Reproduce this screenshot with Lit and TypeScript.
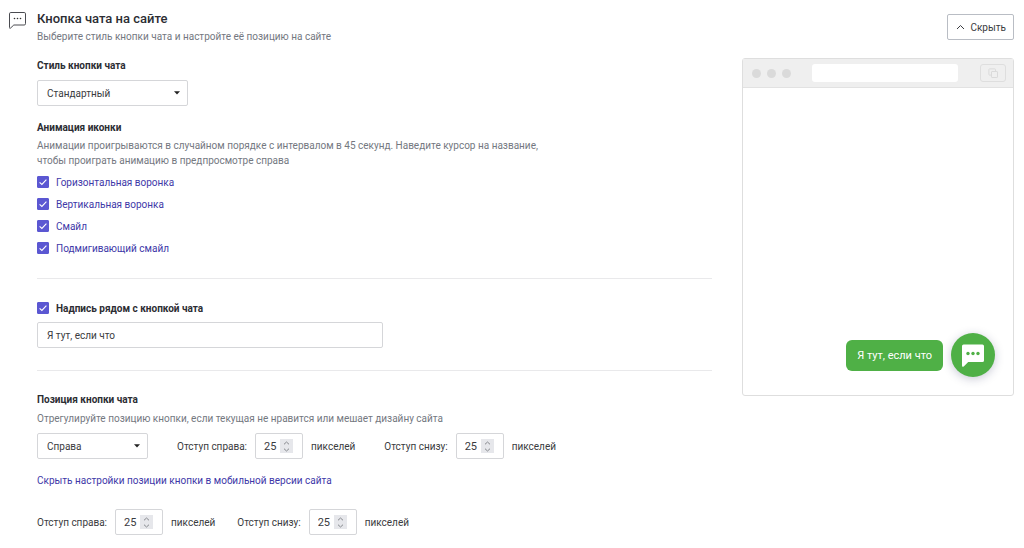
import { LitElement, html, css, svg } from "lit";
import { customElement, property, state } from "lit/decorators.js";

@customElement("pixel-field")
export class PixelField extends LitElement {
  @property() label = "";
  @property({ type: Number }) value = 25;

  static styles = css`
    :host {
      display: block;
    }
    .field {
      display: flex;
      align-items: center;
      gap: 8px;
      white-space: nowrap;
    }
    .box {
      box-sizing: border-box;
      display: flex;
      align-items: center;
      width: 48px;
      height: 26px;
      padding: 0 9px 0 8px;
      border: 1px solid #d5d6d9;
      border-radius: 2px;
      background: #fff;
    }
    .number {
      flex: 1;
      min-width: 0;
      width: 0;
      padding: 0;
      border: 0;
      outline: 0;
      background: none;
      color: inherit;
      font: inherit;
      font-size: 11px;
      appearance: textfield;
    }
    .number::-webkit-inner-spin-button {
      appearance: none;
      margin: 0;
    }
    .spinner {
      display: grid;
      width: 13px;
      height: 14px;
      background: #e6e7eb;
    }
    .step {
      display: grid;
      place-items: center;
      height: 7px;
      padding: 0;
      border: 0;
      background: none;
    }
    .arrow {
      display: block;
      fill: none;
      stroke: #85878c;
    }
  `;

  private step(delta: number) {
    this.value = Math.max(0, this.value + delta);
  }

  render() {
    return html`
      <div class="field">
        <label for="value">${this.label}</label>
        <div class="box">
          <input
            class="number"
            id="value"
            type="number"
            .value=${String(this.value)}
            @change=${(e: Event) => (this.value = Number((e.target as HTMLInputElement).value))}
          />
          <div class="spinner">
            <button class="step" aria-label="Больше" @click=${() => this.step(1)}>
              <svg class="arrow" width="7" height="4" viewBox="0 0 7 4"><path d="M1 3.3 3.5 1 6 3.3" /></svg>
            </button>
            <button class="step" aria-label="Меньше" @click=${() => this.step(-1)}>
              <svg class="arrow" width="7" height="4" viewBox="0 0 7 4"><path d="M1 .7 3.5 3 6 .7" /></svg>
            </button>
          </div>
        </div>
        <span>пикселей</span>
      </div>
    `;
  }
}

@customElement("check-option")
export class CheckOption extends LitElement {
  @property() label = "";
  @property({ type: Boolean, reflect: true }) strong = false;

  static styles = css`
    :host {
      display: block;
      color: #3e38a8;
    }
    :host([strong]) {
      color: #2c2d33;
      font-weight: 700;
    }
    .option {
      display: flex;
      align-items: center;
      gap: 7px;
      height: 22px;
    }
    .tick {
      appearance: none;
      width: 12px;
      height: 12px;
      margin: 0;
      border: 1px solid #5b57d2;
      border-radius: 1px;
    }
    .tick:checked {
      background: #5b57d2
        url("data:image/svg+xml,%3Csvg xmlns='http://www.w3.org/2000/svg' viewBox='0 0 10 10'%3E%3Cpath d='M1.6 5.3 3.9 7.5 8.4 2.7' fill='none' stroke='%23fff' stroke-width='1.1'/%3E%3C/svg%3E")
        center / 10px 10px no-repeat;
    }
  `;

  render() {
    return html`
      <div class="option">
        <input class="tick" id="tick" type="checkbox" checked />
        <label for="tick">${this.label}</label>
      </div>
    `;
  }
}

@customElement("chat-preview")
export class ChatPreview extends LitElement {
  @property() text = "";

  static styles = css`
    :host {
      display: block;
    }
    .window {
      box-sizing: border-box;
      display: flex;
      flex-direction: column;
      min-height: 338px;
      border: 1px solid #dedede;
      border-radius: 3px;
      background: #fff;
    }
    .bar {
      display: flex;
      align-items: center;
      height: 28px;
      padding: 0 7px 0 9px;
      border-bottom: 1px solid #e2e2e2;
      background: #efefef;
    }
    .dots {
      display: flex;
      gap: 6px;
    }
    .dot {
      width: 9px;
      height: 9px;
      border-radius: 50%;
      background: #dadada;
    }
    .address {
      flex: 1;
      height: 18px;
      margin: 0 22px 0 21px;
      border-radius: 3px;
      background: #fff;
    }
    .copy {
      box-sizing: border-box;
      display: grid;
      place-items: center;
      width: 26px;
      height: 18px;
      padding: 0;
      border: 1px solid #dedede;
      border-radius: 3px;
      background: none;
    }
    .stage {
      flex: 1;
      display: flex;
      align-items: flex-end;
      justify-content: flex-end;
      padding: 18px;
    }
    .chat {
      display: flex;
      align-items: center;
      gap: 8px;
    }
    .bubble {
      padding: 8px 11px;
      border-radius: 6px;
      background: #4fb046;
      color: #fff;
      font-size: 11px;
      line-height: 15px;
    }
    .launcher {
      display: grid;
      place-items: center;
      width: 44px;
      height: 44px;
      padding: 0;
      border: 0;
      border-radius: 50%;
      background: #4fb046;
      box-shadow: 0 2px 10px rgba(40, 45, 90, 0.25);
    }
  `;

  render() {
    return html`
      <div class="window">
        <div class="bar">
          <div class="dots">
            <span class="dot"></span><span class="dot"></span><span class="dot"></span>
          </div>
          <div class="address"></div>
          <button class="copy" aria-label="Копировать">
            <svg width="11" height="11" viewBox="0 0 11 11" fill="none" stroke="#dadada">
              <path d="M7.5 3V1.5a.6.6 0 0 0-.6-.6H1.5a.6.6 0 0 0-.6.6v5a.6.6 0 0 0 .6.6H3" />
              <rect x="3.5" y="3.5" width="6" height="6" rx=".6" />
            </svg>
          </button>
        </div>
        <div class="stage">
          <div class="chat">
            <div class="bubble">${this.text}</div>
            <button class="launcher" aria-label="Чат">
              <svg width="24" height="24" viewBox="0 0 24 24">
                <path fill="#fff" d="M2.600 1.500h18.800A1.600 1.600 0 0 1 23 3.100v14.300A1.600 1.600 0 0 1 21.400 19H7.200L3 23.200Q1 24.800 1 22.300V3.100A1.600 1.600 0 0 1 2.600 1.500Z" />
                <circle cx="7" cy="10.500" r="1.700" fill="#4fb046" />
                <circle cx="12" cy="10.500" r="1.700" fill="#4fb046" />
                <circle cx="17" cy="10.500" r="1.700" fill="#4fb046" />
              </svg>
            </button>
          </div>
        </div>
      </div>
    `;
  }
}

@customElement("app-root")
export class AppRoot extends LitElement {
  @state() private caption = "Я тут, если что";

  static styles = css`
    :host {
      display: block;
      padding: 10px 10px 12px 9px;
      background: #fff;
      color: #3a3b40;
      font: 10px/15px Roboto, "Noto Sans", sans-serif;
    }
    .page {
      display: grid;
      grid-template-columns: 17px minmax(0, 1fr) 272px;
      column-gap: 11px;
    }
    .mark {
      display: block;
      margin-top: 2px;
    }
    .main {
      margin-right: 19px;
    }
    .title {
      margin: 0 0 1px;
      color: #2c2d33;
      font-size: 13px;
      line-height: 18px;
      font-weight: 500;
    }
    .hint {
      margin: 0;
      max-width: 520px;
      color: #74787f;
    }
    .heading {
      display: block;
      margin: 0;
      color: #2c2d33;
      font-size: 10px;
      line-height: 16px;
      font-weight: 700;
    }
    .style {
      margin: 14px 0;
    }
    .style .select {
      margin-top: 6px;
    }
    .animation .hint {
      margin: 2px 0 3px;
    }
    .select {
      box-sizing: border-box;
      display: block;
      appearance: none;
      height: 26px;
      padding: 0 20px 0 9px;
      border: 1px solid #d5d6d9;
      border-radius: 2px;
      background: #fff
        url("data:image/svg+xml,%3Csvg xmlns='http://www.w3.org/2000/svg' viewBox='0 0 6 4'%3E%3Cpath d='M0 .3h6L3 3.500z' fill='%23222'/%3E%3C/svg%3E")
        right 7px center / 6px 4px no-repeat;
      color: inherit;
      font: inherit;
    }
    .wide {
      width: 151px;
    }
    .narrow {
      width: 111px;
    }
    .line {
      height: 0;
      margin: 19px 0 18px;
      border: 0;
      border-top: 1px solid #e9e9eb;
    }
    .caption {
      box-sizing: border-box;
      display: block;
      width: 100%;
      max-width: 346px;
      height: 26px;
      margin: 3px 0 22px;
      padding: 0 9px;
      border: 1px solid #d5d6d9;
      border-radius: 2px;
      color: inherit;
      font: inherit;
    }
    .position .heading {
      margin: 21px 0 3px;
    }
    .row {
      display: flex;
      align-items: center;
      column-gap: 22px;
    }
    .desktop {
      column-gap: 29px;
      margin: 7px 0 14px;
    }
    .link {
      display: block;
      margin-bottom: 21px;
      color: #3e38a8;
      text-decoration: none;
    }
    .side {
      display: flex;
      flex-direction: column;
      padding-top: 4px;
    }
    .hide {
      box-sizing: border-box;
      display: flex;
      align-items: center;
      gap: 5px;
      align-self: flex-end;
      height: 26px;
      margin-bottom: 18px;
      padding: 0 7px 0 8px;
      border: 1px solid #b9bdc4;
      border-radius: 2px;
      background: #fff;
      color: inherit;
      font: inherit;
    }
  `;

  render() {
    const animations = ["Горизонтальная воронка", "Вертикальная воронка", "Смайл", "Подмигивающий смайл"];
    const dots = [5.5, 8.5, 11.5].map((x) => svg`<circle cx=${x} cy="6.500" r=".8" fill="#333" />`);
    return html`
      <div class="page">
        <svg class="mark" width="17" height="18" viewBox="0 0 17 18">
          <path
            d="M1.800.5h13.400a1.300 1.300 0 0 1 1.300 1.300v9.900a1.300 1.300 0 0 1-1.300 1.300H4.800L1.600 16Q.5 16.900.5 15.500V1.800A1.300 1.300 0 0 1 1.800.5Z"
            fill="none"
            stroke="#4a4b50"
          />
          ${dots}
        </svg>
        <main class="main">
          <h1 class="title">Кнопка чата на сайте</h1>
          <p class="hint">Выберите стиль кнопки чата и настройте её позицию на сайте</p>

          <section class="style">
            <label class="heading" for="style">Стиль кнопки чата</label>
            <select class="select wide" id="style">
              <option>Стандартный</option>
            </select>
          </section>

          <section class="animation">
            <h2 class="heading">Анимация иконки</h2>
            <p class="hint">
              Анимации проигрываются в случайном порядке с интервалом в 45 секунд. Наведите курсор на название, чтобы
              проиграть анимацию в предпросмотре справа
            </p>
            ${animations.map((name) => html`<check-option label=${name}></check-option>`)}
          </section>

          <hr class="line" />

          <section>
            <check-option strong label="Надпись рядом с кнопкой чата"></check-option>
            <input
              class="caption"
              type="text"
              aria-label="Надпись рядом с кнопкой чата"
              .value=${this.caption}
              @input=${(e: Event) => (this.caption = (e.target as HTMLInputElement).value)}
            />
          </section>

          <hr class="line" />

          <section class="position">
            <h2 class="heading">Позиция кнопки чата</h2>
            <p class="hint">Отрегулируйте позицию кнопки, если текущая не нравится или мешает дизайну сайта</p>
            <div class="row desktop">
              <select class="select narrow" aria-label="Позиция кнопки чата">
                <option>Справа</option>
              </select>
              <pixel-field label="Отступ справа:"></pixel-field>
              <pixel-field label="Отступ снизу:"></pixel-field>
            </div>
            <a class="link" href="#">Скрыть настройки позиции кнопки в мобильной версии сайта</a>
            <div class="row">
              <pixel-field label="Отступ справа:"></pixel-field>
              <pixel-field label="Отступ снизу:"></pixel-field>
            </div>
          </section>
        </main>
        <aside class="side">
          <button class="hide">
            <svg width="9" height="6" viewBox="0 0 9 6" fill="none" stroke="#3a3b40"><path d="M1 5 4.500 1.500 8 5" /></svg>
            Скрыть
          </button>
          <chat-preview .text=${this.caption}></chat-preview>
        </aside>
      </div>
    `;
  }
}
